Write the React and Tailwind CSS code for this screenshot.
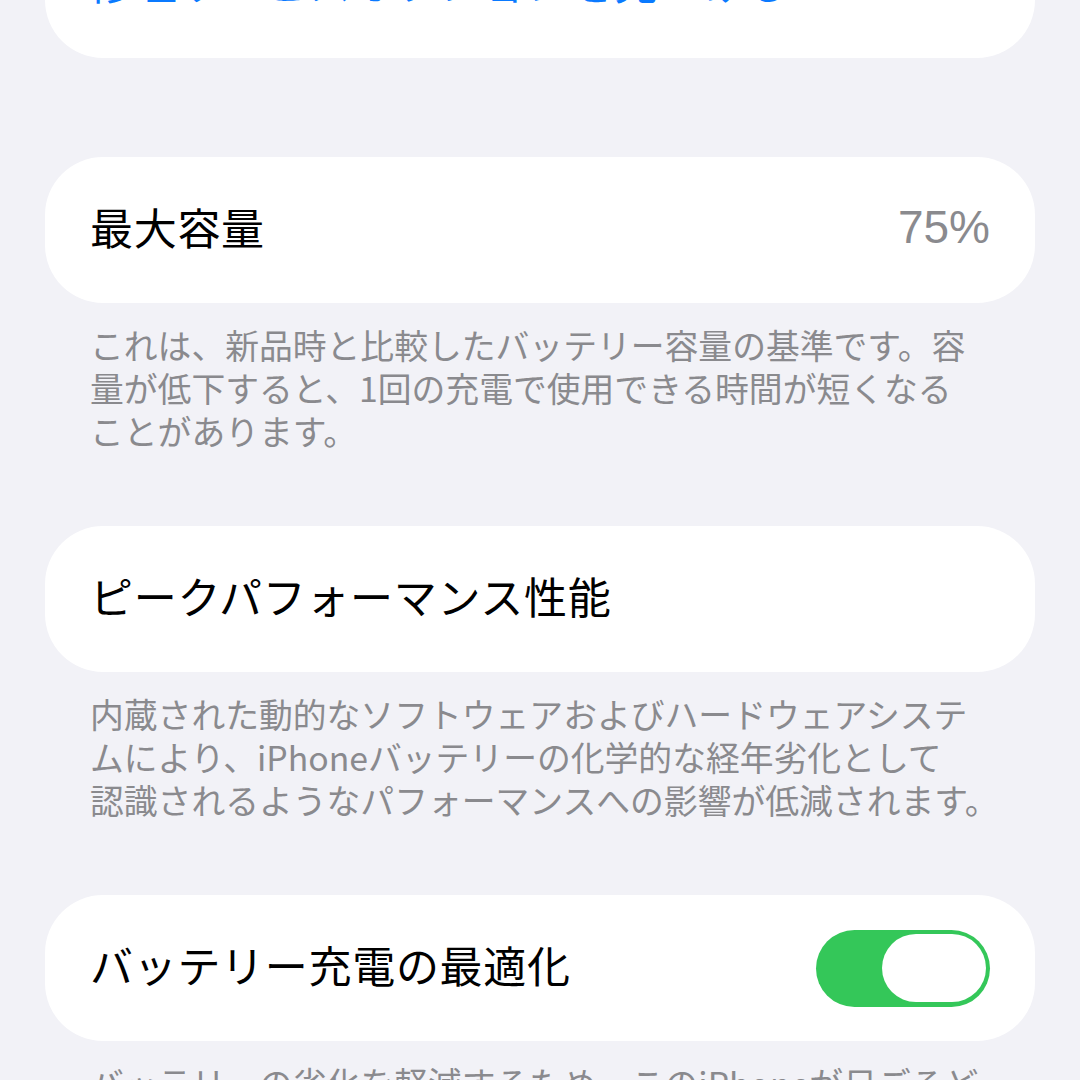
const font = { fontFamily: '"Noto Sans CJK JP", "Noto Sans", sans-serif' };

const Card = ({ children, className = "" }) => (
  <div
    className={`mx-[45px] h-[146px] shrink-0 rounded-[58px] bg-white pl-[45px] pr-[45px] flex items-center justify-between ${className}`}
  >
    {children}
  </div>
);

const Title = ({ children, color = "text-black" }) => (
  <span className={`pb-[8px] text-[43px] leading-none tracking-[0.7px] ${color}`}>
    {children}
  </span>
);

const Note = ({ lines }) => (
  <p className="px-[90px] pt-[20px] pb-[74px] text-[33.8px] leading-[43px] text-[#8a8a8e] whitespace-nowrap">
    {lines.map((l, i) => (
      <span key={i} className="block">
        {l}
      </span>
    ))}
  </p>
);

const Toggle = () => (
  <div className="w-[174px] h-[77px] rounded-full bg-[#34c759] flex items-center justify-end pr-[4px]">
    <div className="w-[104px] h-[68px] rounded-full bg-white" />
  </div>
);

export default function App() {
  return (
    <div
      className="w-[1080px] h-[1080px] overflow-hidden bg-[#f2f2f7] flex flex-col"
      style={font}
    >
      <Card className="-mt-[88px] mb-[99px]">
        <Title color="text-[#0a7aff]">修理サービスオプションを見つける</Title>
      </Card>

      <Card>
        <Title>最大容量</Title>
        <span
          className="pb-[6px] text-[46px] leading-none text-[#8a8a8e]"
          style={{ fontFamily: '"Liberation Sans", Arial, sans-serif' }}
        >
          75%
        </span>
      </Card>
      <Note
        lines={[
          "これは、新品時と比較したバッテリー容量の基準です。容",
          "量が低下すると、1回の充電で使用できる時間が短くなる",
          "ことがあります。",
        ]}
      />

      <Card>
        <Title>ピークパフォーマンス性能</Title>
      </Card>
      <Note
        lines={[
          "内蔵された動的なソフトウェアおよびハードウェアシステ",
          "ムにより、iPhoneバッテリーの化学的な経年劣化として",
          "認識されるようなパフォーマンスへの影響が低減されます。",
        ]}
      />

      <Card>
        <Title>バッテリー充電の最適化</Title>
        <Toggle />
      </Card>
      <Note
        lines={[
          "バッテリーの劣化を軽減するため、このiPhoneが日ごろど",
          "のように充電されているかを学習し、80%以上の充電は",
          "iPhoneを使用するときまで待機します。",
        ]}
      />
    </div>
  );
}
